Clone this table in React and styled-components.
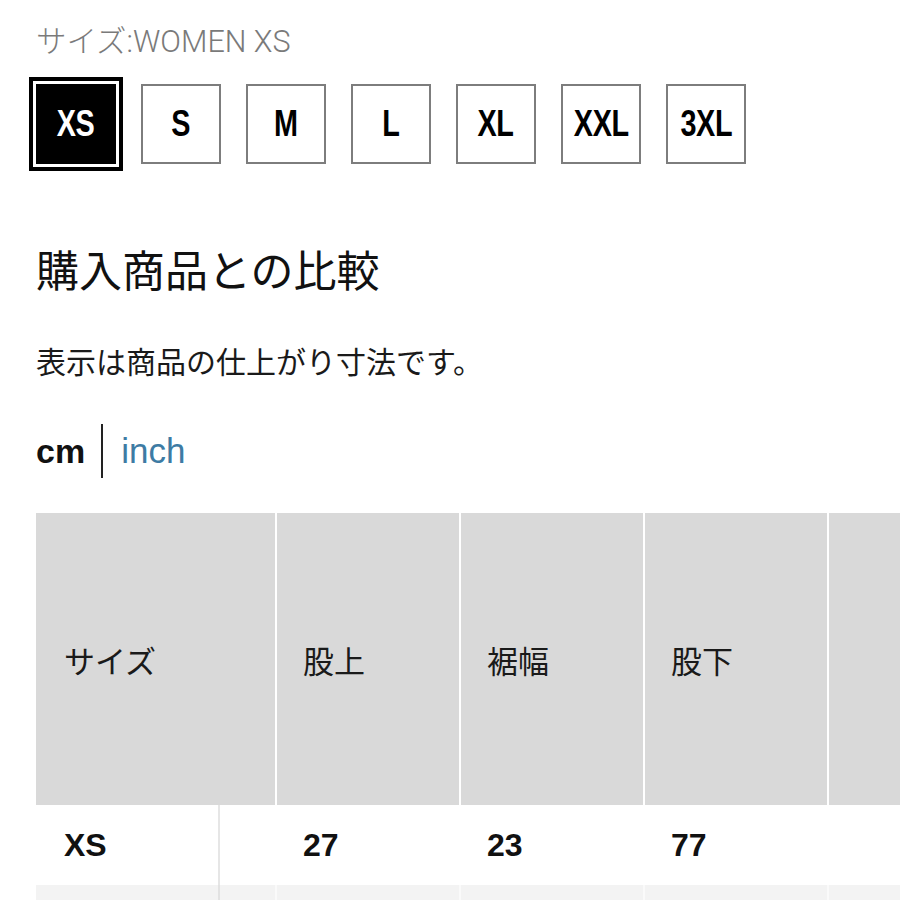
import React from 'react';
import styled, { createGlobalStyle } from 'styled-components';

const GlobalStyle = createGlobalStyle`
  html, body {
    margin: 0;
    padding: 0;
    background: #fff;
    overflow: hidden;
  }
  body {
    font-family: "Liberation Sans", "Noto Sans CJK JP", sans-serif;
    color: #111;
  }
`;

const Page = styled.div`
  width: 900px;
  height: 900px;
  overflow: hidden;
  padding: 24px 0 0 36px;
  box-sizing: border-box;
  display: flex;
  flex-direction: column;
`;

const SizeLabel = styled.div`
  font-family: Roboto, "Noto Sans CJK JP", sans-serif;
  font-size: 30.5px;
  line-height: 36px;
  color: #7a7a7a;
  font-weight: 300;
`;

const SizeRow = styled.div`
  display: flex;
  gap: 25px;
  margin-top: 24px;
`;

const SizeBox = styled.div`
  width: 80px;
  height: 80px;
  box-sizing: border-box;
  display: flex;
  align-items: center;
  justify-content: center;
  background: ${p => (p.$active ? '#000' : '#fff')};
  color: ${p => (p.$active ? '#fff' : '#000')};
  border: ${p => (p.$active ? 'none' : '2px solid #7d7d7d')};
  box-shadow: ${p => (p.$active ? '0 0 0 3px #fff, 0 0 0 7px #000' : 'none')};
`;

const SizeText = styled.span`
  display: inline-block;
  font-family: "Liberation Sans", sans-serif;
  font-weight: 700;
  font-size: 36px;
  transform: scaleX(0.8);
  letter-spacing: -0.5px;
`;

const Heading = styled.h2`
  margin: 76px 0 0;
  font-family: "Noto Sans CJK JP", sans-serif;
  font-weight: 400;
  font-size: 43px;
  line-height: 56px;
  color: #111;
`;

const Note = styled.p`
  margin: 44px 0 0;
  font-family: "Noto Sans CJK JP", sans-serif;
  font-size: 30px;
  line-height: 40px;
  color: #1a1a1a;
`;

const UnitRow = styled.div`
  display: flex;
  align-items: center;
  height: 54px;
  margin-top: 44px;
`;

const Unit = styled.span`
  font-family: "Liberation Sans", sans-serif;
  font-size: ${p => (p.$active ? 34 : 35)}px;
  font-weight: ${p => (p.$active ? 700 : 400)};
  color: ${p => (p.$active ? '#111' : '#3d7ba4')};
`;

const Divider = styled.span`
  width: 2px;
  height: 54px;
  background: #222;
  margin: 0 18px 0 16px;
`;

const Table = styled.div`
  margin-top: 35px;
  width: 1100px;
  display: flex;
  flex-direction: column;
`;

const Row = styled.div`
  display: grid;
  grid-template-columns: 184px 57px 184px 184px 184px 184px;
  height: ${p => p.$height}px;
  background: ${p => p.$bg};
`;

const Cell = styled.div`
  grid-column: ${p => (p.$span ? `span ${p.$span}` : 'auto')};
  display: flex;
  align-items: center;
  padding-left: ${p => p.$pad || 26}px;
  box-sizing: border-box;
  border-right: 2px solid ${p => p.$line || 'transparent'};
`;

const HeadText = styled.span`
  font-family: "Noto Sans CJK JP", sans-serif;
  font-size: 31px;
  color: #1a1a1a;
`;

const BodyText = styled.span`
  font-family: "Liberation Sans", sans-serif;
  font-weight: 700;
  font-size: 32px;
  color: #111;
`;

const sizes = ['XS', 'S', 'M', 'L', 'XL', 'XXL', '3XL'];
const headers = ['股上', '裾幅', '股下', ''];
const values = ['27', '23', '77', ''];

export default function App() {
  return (
    <Page>
      <GlobalStyle />
      <SizeLabel>サイズ:WOMEN XS</SizeLabel>
      <SizeRow>
        {sizes.map(s => (
          <SizeBox key={s} $active={s === 'XS'}>
            <SizeText>{s}</SizeText>
          </SizeBox>
        ))}
      </SizeRow>
      <Heading>購入商品との比較</Heading>
      <Note>表示は商品の仕上がり寸法です。</Note>
      <UnitRow>
        <Unit $active>cm</Unit>
        <Divider />
        <Unit>inch</Unit>
      </UnitRow>
      <Table>
        <Row $height={292} $bg="#d9d9d9">
          <Cell $span={2} $pad={28} $line="#fff">
            <HeadText>サイズ</HeadText>
          </Cell>
          {headers.map((h, i) => (
            <Cell key={i} $line="#fff">
              <HeadText>{h}</HeadText>
            </Cell>
          ))}
        </Row>
        <Row $height={80} $bg="#fff">
          <Cell $pad={28} $line="#e6e6e6">
            <BodyText>XS</BodyText>
          </Cell>
          <Cell />
          {values.map((v, i) => (
            <Cell key={i}>
              <BodyText>{v}</BodyText>
            </Cell>
          ))}
        </Row>
        <Row $height={80} $bg="#f3f3f3">
          <Cell $line="#e2e2e2" />
          <Cell $line="#fafafa" />
          {values.map((v, i) => (
            <Cell key={i} $line="#fafafa" />
          ))}
        </Row>
      </Table>
    </Page>
  );
}
